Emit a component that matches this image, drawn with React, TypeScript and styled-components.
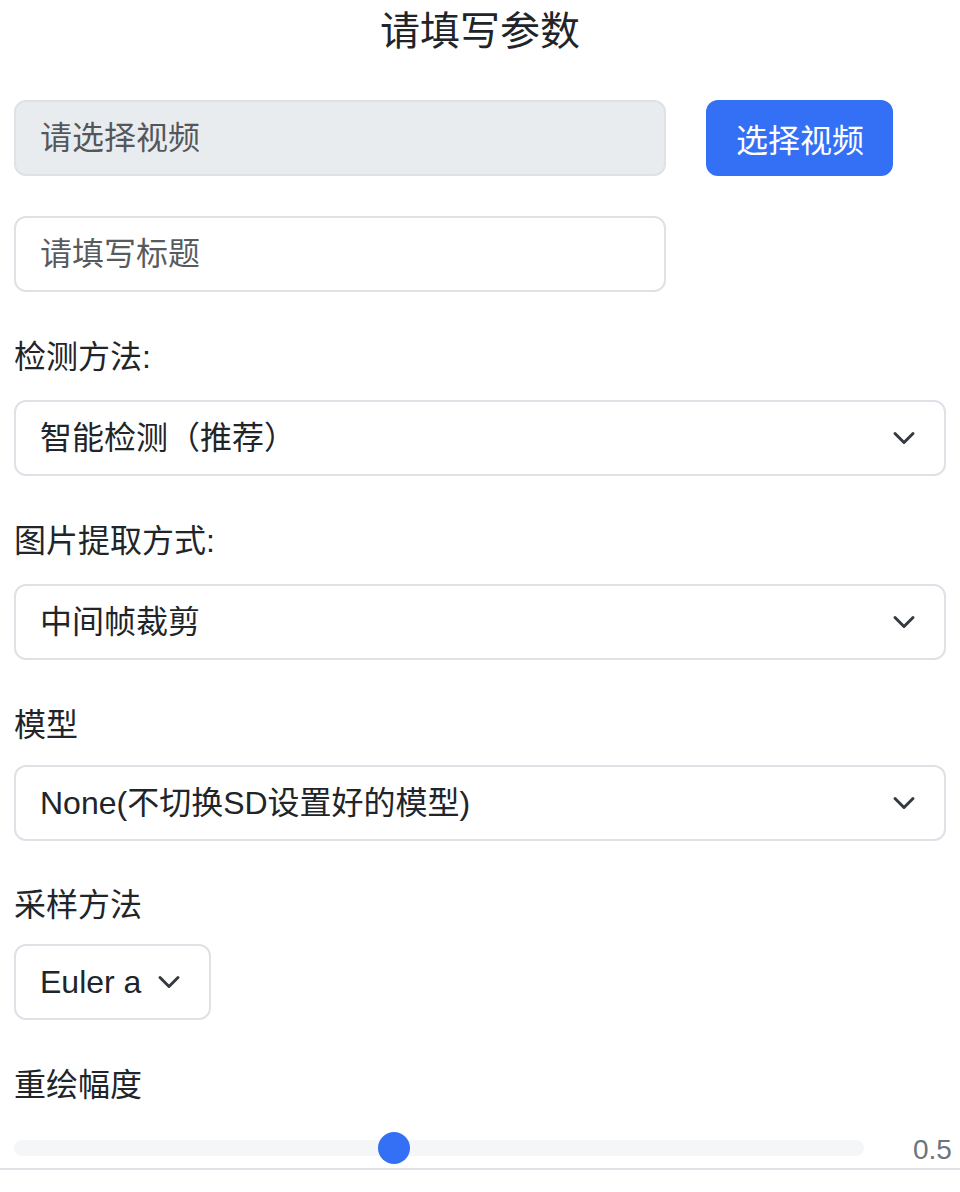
import React from "react";
import styled, { createGlobalStyle } from "styled-components";

const GlobalStyle = createGlobalStyle`
  html, body {
    margin: 0;
    padding: 0;
    background: #ffffff;
  }
  body {
    font-family: "Liberation Sans", "Noto Sans CJK SC", sans-serif;
    color: #212529;
  }
  * { box-sizing: border-box; }
`;

const Page = styled.div`
  display: flex;
  flex-direction: column;
  width: 960px;
`;

const Title = styled.h1`
  margin: 7px 0 0;
  font-size: 40px;
  line-height: 48px;
  font-weight: 400;
  text-align: center;
  color: #212529;
`;

const Form = styled.form`
  display: flex;
  flex-direction: column;
  padding: 45px 14px 0;
`;

const TopRow = styled.div`
  display: flex;
  align-items: center;
  gap: 40px;
  margin-bottom: 40px;
`;

const TextInput = styled.input<{ $readOnlyLook?: boolean }>`
  width: 70%;
  height: 76px;
  padding: 0 24px;
  font-family: inherit;
  font-size: 32px;
  color: #212529;
  border: 2px solid #dee2e6;
  border-radius: 12px;
  background: ${(p) => (p.$readOnlyLook ? "#e9ecef" : "#ffffff")};
  outline: none;
  &::placeholder {
    color: rgba(33, 37, 41, 0.75);
  }
`;

const PrimaryButton = styled.button`
  height: 76px;
  padding: 0 27.5px;
  font-family: inherit;
  font-size: 32px;
  color: #ffffff;
  background: #3370f5;
  border: 2px solid #3370f5;
  border-radius: 12px;
  cursor: pointer;
`;

const Field = styled.div<{ $top: number }>`
  display: flex;
  flex-direction: column;
  margin-top: ${(p) => p.$top}px;
`;

const Label = styled.label<{ $gap: number }>`
  display: block;
  font-size: 32px;
  line-height: 48px;
  margin-bottom: ${(p) => p.$gap}px;
`;

const SelectBox = styled.div<{ $inline?: boolean }>`
  display: flex;
  align-items: center;
  justify-content: space-between;
  gap: 16px;
  align-self: ${(p) => (p.$inline ? "flex-start" : "stretch")};
  height: 76px;
  padding: 0 28px 0 24px;
  font-size: 32px;
  line-height: 48px;
  color: #212529;
  background: #ffffff;
  border: 2px solid #dee2e6;
  border-radius: 12px;
`;

const Chevron = styled.svg`
  flex: none;
  width: 24px;
  height: 24px;
`;

const SliderRow = styled.div`
  display: flex;
  align-items: center;
  height: 32px;
  margin-top: 23px;
  margin-right: -6px;
`;

const Track = styled.div`
  position: relative;
  flex: 1;
  height: 16px;
  border-radius: 8px;
  background: #f5f6f8;
`;

const Thumb = styled.div`
  position: absolute;
  top: -8px;
  width: 32px;
  height: 32px;
  border-radius: 50%;
  background: #3370f5;
`;

const Value = styled.span`
  flex: none;
  width: 39px;
  margin-left: 49px;
  padding-top: 4px;
  font-size: 28px;
  line-height: 32px;
  color: #6c757d;
`;

const Divider = styled.hr`
  width: 100%;
  margin: 4px 0 0;
  border: none;
  border-top: 2px solid #dee2e6;
`;

const ChevronIcon = () => (
  <Chevron viewBox="0 0 16 16" fill="none">
    <path
      d="m2 5 6 6 6-6"
      stroke="#343a40"
      strokeWidth="2"
      strokeLinecap="round"
      strokeLinejoin="round"
    />
  </Chevron>
);

type SelectProps = {
  label: string;
  value: string;
  top: number;
  gap: number;
  inline?: boolean;
};

const SelectField = ({ label, value, top, gap, inline }: SelectProps) => (
  <Field $top={top}>
    <Label $gap={gap}>{label}</Label>
    <SelectBox $inline={inline} role="combobox">
      <span>{value}</span>
      <ChevronIcon />
    </SelectBox>
  </Field>
);

export default function App() {
  const strength = 0.5;
  const thumbLeft = 364;
  return (
    <Page>
      <GlobalStyle />
      <Title>请填写参数</Title>
      <Form onSubmit={(e) => e.preventDefault()}>
        <TopRow>
          <TextInput $readOnlyLook readOnly placeholder="请选择视频" />
          <PrimaryButton type="button">选择视频</PrimaryButton>
        </TopRow>
        <TextInput placeholder="请填写标题" />
        <SelectField label="检测方法:" value="智能检测（推荐）" top={41} gap={19} />
        <SelectField label="图片提取方式:" value="中间帧裁剪" top={41} gap={19} />
        <SelectField label="模型" value="None(不切换SD设置好的模型)" top={41} gap={16} />
        <SelectField label="采样方法" value="Euler a" top={40} gap={15} inline />
        <Field $top={41}>
          <Label $gap={0}>重绘幅度</Label>
          <SliderRow>
            <Track>
              <Thumb style={{ left: thumbLeft }} />
            </Track>
            <Value>{strength}</Value>
          </SliderRow>
        </Field>
      </Form>
      <Divider />
    </Page>
  );
}
